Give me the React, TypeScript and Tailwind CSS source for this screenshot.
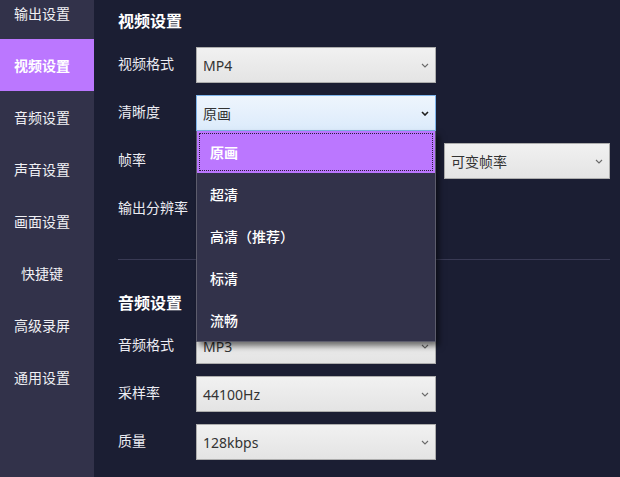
import React from "react";

const cjk = { fontFamily: '"Noto Sans CJK SC", "Noto Sans", sans-serif' };
const latin = { fontFamily: '"Noto Sans", "Noto Sans CJK SC", sans-serif' };

const navItems = ["输出设置", "视频设置", "音频设置", "声音设置", "画面设置", "快捷键", "高级录屏", "通用设置"];

function Chevron({ dark }: { dark?: boolean }) {
  return (
    <svg width="8" height="5" viewBox="0 0 8 5" className="shrink-0">
      <path d="M1 1 L4 4 L7 1" fill="none" stroke={dark ? "#1e1e1e" : "#6a6a6a"} strokeWidth={dark ? 1.6 : 1.1} />
    </svg>
  );
}

function Select({ value, width = "w-[240px]", focused }: { value: string; width?: string; focused?: boolean }) {
  const box = focused
    ? "border-[#7eb4ea] bg-gradient-to-b from-[#eef5fd] to-[#dcebfb]"
    : "border-[#adadad] bg-gradient-to-b from-[#f1f1f1] to-[#e4e4e4]";
  return (
    <div className={`flex h-[36px] ${width} shrink-0 items-center justify-between border pl-[6px] pr-[6px] ${box}`}>
      <span className="text-[14px] text-[#333]" style={latin}>
        {value}
      </span>
      <Chevron dark={focused} />
    </div>
  );
}

function Row({ label, children }: { label: string; children: React.ReactNode }) {
  return (
    <div className="mb-[12px] flex h-[36px] items-center">
      <div className="w-[78px] shrink-0 pb-[4px] text-[14px] text-[#ececf2]">{label}</div>
      <div className="flex gap-[8px]">{children}</div>
    </div>
  );
}

const qualityOptions = ["原画", "超清", "高清（推荐）", "标清", "流畅"];

export default function App() {
  return (
    <div className="flex h-[477px] w-[620px] overflow-hidden bg-[#1b1e33]" style={cjk}>
      {/* left navigation */}
      <aside className="w-[94px] shrink-0 bg-[#32324a]">
        <div className="-mt-[13px]">
          {navItems.map((item, i) => (
            <div
              key={item}
              className={`flex h-[52px] items-center justify-center pr-[10px] text-[14px] ${
                i === 1 ? "bg-[#bb77ff] font-bold text-white" : "text-[#f0f0f4]"
              }`}
            >
              {item}
            </div>
          ))}
        </div>
      </aside>

      {/* settings panel */}
      <main className="relative flex-1 pl-[24px] pr-[10px] pt-[8px]">
        <h2 className="mb-[15px] h-[24px] text-[16px] font-bold leading-[24px] text-white">视频设置</h2>
        <Row label="视频格式">
          <Select value="MP4" />
        </Row>
        <div className="relative">
          <Row label="清晰度">
            <Select value="原画" focused />
          </Row>
          {/* open dropdown list */}
          <div className="absolute left-[78px] top-[36px] z-10 w-[240px] border border-t-0 border-[#5c5c6c] bg-[#32324a] shadow-[3px_4px_6px_rgba(0,0,0,0.55)]">
            {qualityOptions.map((opt, i) => (
              <div
                key={opt}
                className={`flex h-[42px] items-center pl-[13px] text-[14px] text-white ${
                  i === 0 ? "bg-[#bb77ff] font-bold outline-1 -outline-offset-[3px] outline-dotted outline-[#2a1f3a]" : "font-medium"
                }`}
              >
                {opt}
              </div>
            ))}
          </div>
        </div>
        <Row label="帧率">
          <Select value="" />
          <Select value="可变帧率" width="w-[166px]" />
        </Row>
        <Row label="输出分辨率">
          <Select value="" />
        </Row>

        <div className="mt-[32px] h-px bg-[#393a54]" />

        <h2 className="mb-[14px] mt-[30px] h-[24px] text-[16px] font-bold leading-[24px] text-white">音频设置</h2>
        <Row label="音频格式">
          <Select value="MP3" />
        </Row>
        <Row label="采样率">
          <Select value="44100Hz" />
        </Row>
        <Row label="质量">
          <Select value="128kbps" />
        </Row>
      </main>
    </div>
  );
}
